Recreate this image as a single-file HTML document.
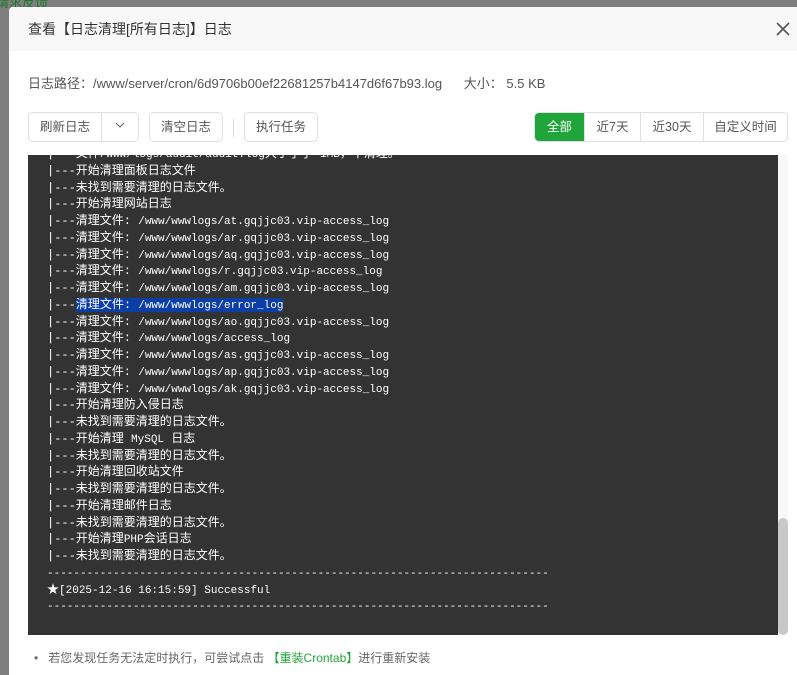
<!DOCTYPE html>
<html><head><meta charset="utf-8"><style>
*{margin:0;padding:0;box-sizing:border-box}
body{width:797px;height:675px;overflow:hidden;background:#7f7f7f;font-family:"Liberation Sans","Noto Sans CJK SC",sans-serif;position:relative}
.fb{position:absolute;left:-4px;top:-8px;color:#1a7a2a;font-size:13px}
.dlg{position:absolute;left:9px;top:7px;width:788px;height:668px;background:#fff;border-radius:4px 0 0 0;overflow:hidden}
.hd{height:44px;background:#f8f8f8;font-size:14px;color:#333;padding-left:19px;line-height:45px}
.x{position:absolute;left:766px;top:14px}
.path{position:absolute;left:19px;top:66px;font-size:13px;color:#555}
.btn{position:absolute;top:105px;height:30px;border:1px solid #dcdfe6;border-radius:5px;font-size:12.5px;color:#555;line-height:28px;text-align:center;background:#fff}
.seg{position:absolute;top:105px;left:525px;height:30px;width:254px;border:1px solid #dcdfe6;border-radius:5px;display:flex;overflow:hidden;font-size:12.5px;color:#555;line-height:28px}
.seg div{text-align:center;border-left:1px solid #dcdfe6}
.log{position:absolute;left:19px;top:148px;width:750px;height:480px;background:#333;overflow:hidden}
.lines{position:absolute;left:19px;top:-9px;font-family:"Liberation Mono","Noto Sans CJK SC",monospace;font-size:12px;color:#fff}
.lines div{height:16.75px;line-height:16.75px;white-space:pre}
.m{font-size:11px;line-height:0}
.sel{background:#0c3ea8;line-height:14px;display:inline-block}
.sb{position:absolute;left:769px;top:148px;width:10px;height:480px;background:#f8f8f8}
.th{position:absolute;left:0;top:363px;width:10px;height:117px;background:#c8c8c8;border-radius:5px}
.tip{position:absolute;left:25px;top:642px;font-size:12px;color:#666}
.tip b{font-weight:normal;color:#20a53a}
</style></head><body>
<div class="fb">请求反馈</div>
<div class="dlg">
<div class="hd">查看【日志清理[所有日志]】日志</div>
<svg class="x" width="16" height="16" viewBox="0 0 16 16"><path d="M2 2L14 14M14 2L2 14" stroke="#555" stroke-width="1.6"/></svg>
<div class="path">日志路径：/www/server/cron/6d9706b00ef22681257b4147d6f67b93.log&nbsp;&nbsp;&nbsp;&nbsp;&nbsp;&nbsp;大小：&nbsp;5.5 KB</div>
<div class="btn" style="left:19px;width:111px;text-align:left"><span style="display:inline-block;width:73px;text-align:center;border-right:1px solid #dcdfe6">刷新日志</span><svg width="36" height="12" viewBox="0 0 36 12"><path d="M14 4l4 4 4-4" fill="none" stroke="#666" stroke-width="1"/></svg></div>
<div class="btn" style="left:140px;width:74px">清空日志</div>
<div style="position:absolute;left:224px;top:112px;width:1px;height:18px;background:#ddd"></div>
<div class="btn" style="left:235px;width:74px">执行任务</div>
<div class="seg"><div style="width:49px;background:#20a53a;color:#fff;border:none">全部</div><div style="width:56px">近7天</div><div style="width:63px">近30天</div><div style="flex:1">自定义时间</div></div>
<div class="log"><div class="lines">
<div>|---文件<span class="m">/www/logs/audit/audit.log</span>大于了了 <span class="m">1MB</span>，不清理。</div>
<div>|---开始清理面板日志文件</div>
<div>|---未找到需要清理的日志文件。</div>
<div>|---开始清理网站日志</div>
<div>|---清理文件: <span class="m">/www/wwwlogs/at.gqjjc03.vip-access_log</span></div>
<div>|---清理文件: <span class="m">/www/wwwlogs/ar.gqjjc03.vip-access_log</span></div>
<div>|---清理文件: <span class="m">/www/wwwlogs/aq.gqjjc03.vip-access_log</span></div>
<div>|---清理文件: <span class="m">/www/wwwlogs/r.gqjjc03.vip-access_log</span></div>
<div>|---清理文件: <span class="m">/www/wwwlogs/am.gqjjc03.vip-access_log</span></div>
<div>|---<span class="sel">清理文件: <span class="m">/www/wwwlogs/error_log</span></span></div>
<div>|---清理文件: <span class="m">/www/wwwlogs/ao.gqjjc03.vip-access_log</span></div>
<div>|---清理文件: <span class="m">/www/wwwlogs/access_log</span></div>
<div>|---清理文件: <span class="m">/www/wwwlogs/as.gqjjc03.vip-access_log</span></div>
<div>|---清理文件: <span class="m">/www/wwwlogs/ap.gqjjc03.vip-access_log</span></div>
<div>|---清理文件: <span class="m">/www/wwwlogs/ak.gqjjc03.vip-access_log</span></div>
<div>|---开始清理防入侵日志</div>
<div>|---未找到需要清理的日志文件。</div>
<div>|---开始清理 <span class="m">MySQL</span> 日志</div>
<div>|---未找到需要清理的日志文件。</div>
<div>|---开始清理回收站文件</div>
<div>|---未找到需要清理的日志文件。</div>
<div>|---开始清理邮件日志</div>
<div>|---未找到需要清理的日志文件。</div>
<div>|---开始清理<span class="m">PHP</span>会话日志</div>
<div>|---未找到需要清理的日志文件。</div>
<div><span class="m">----------------------------------------------------------------------------</span></div>
<div>★<span class="m">[2025-12-16 16:15:59] Successful</span></div>
<div><span class="m">----------------------------------------------------------------------------</span></div>
</div></div>
<div class="sb"><div class="th"></div></div>
<div class="tip">•&nbsp;&nbsp;&nbsp;若您发现任务无法定时执行，可尝试点击 <b>【重装Crontab】</b>进行重新安装</div>
</div>
</body></html>
